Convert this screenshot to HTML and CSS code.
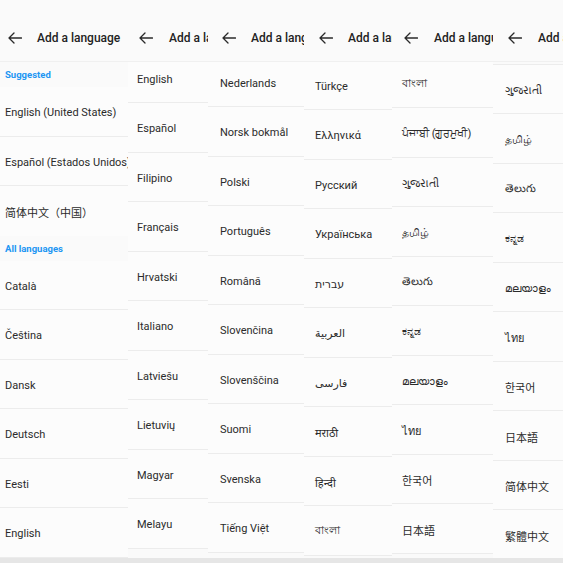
FILE: index.html
```html
<!DOCTYPE html>
<html lang="en">
<head>
<meta charset="utf-8">
<title>Add a language</title>
<link rel="stylesheet" href="styles.css">
</head>
<body>
<div class="screens">

  <section class="col c1">
    <header class="bar">
      <svg class="back" viewBox="0 0 14 12"><path d="M13.5 6H1M6 1L1 6l5 5"/></svg>
      <span class="title">Add a language</span>
    </header>
    <div class="list">
      <div class="label">Suggested</div>
      <div class="item">English (United States)</div>
      <div class="item">Español (Estados Unidos)</div>
      <div class="item last">简体中文（中国）</div>
      <div class="label">All languages</div>
      <div class="item">Català</div>
      <div class="item">Čeština</div>
      <div class="item">Dansk</div>
      <div class="item">Deutsch</div>
      <div class="item">Eesti</div>
      <div class="item">English</div>
    </div>
  </section>

  <section class="col c2">
    <header class="bar">
      <svg class="back" viewBox="0 0 14 12"><path d="M13.5 6H1M6 1L1 6l5 5"/></svg>
      <span class="title">Add a language</span>
    </header>
    <div class="list">
      <div class="item">English</div>
      <div class="item">Español</div>
      <div class="item">Filipino</div>
      <div class="item">Français</div>
      <div class="item">Hrvatski</div>
      <div class="item">Italiano</div>
      <div class="item">Latviešu</div>
      <div class="item">Lietuvių</div>
      <div class="item">Magyar</div>
      <div class="item">Melayu</div>
    </div>
  </section>

  <section class="col c3">
    <header class="bar">
      <svg class="back" viewBox="0 0 14 12"><path d="M13.5 6H1M6 1L1 6l5 5"/></svg>
      <span class="title">Add a language</span>
    </header>
    <div class="list">
      <div class="item">Nederlands</div>
      <div class="item">Norsk bokmål</div>
      <div class="item">Polski</div>
      <div class="item">Português</div>
      <div class="item">Română</div>
      <div class="item">Slovenčina</div>
      <div class="item">Slovenščina</div>
      <div class="item">Suomi</div>
      <div class="item">Svenska</div>
      <div class="item">Tiếng Việt</div>
    </div>
  </section>

  <section class="col c4">
    <header class="bar">
      <svg class="back" viewBox="0 0 14 12"><path d="M13.5 6H1M6 1L1 6l5 5"/></svg>
      <span class="title">Add a language</span>
    </header>
    <div class="list">
      <div class="item">Türkçe</div>
      <div class="item">Ελληνικά</div>
      <div class="item">Русский</div>
      <div class="item">Українська</div>
      <div class="item">עברית</div>
      <div class="item">العربية</div>
      <div class="item">فارسی</div>
      <div class="item">मराठी</div>
      <div class="item">हिन्दी</div>
      <div class="item">বাংলা</div>
    </div>
  </section>

  <section class="col c5">
    <header class="bar">
      <svg class="back" viewBox="0 0 14 12"><path d="M13.5 6H1M6 1L1 6l5 5"/></svg>
      <span class="title">Add a language</span>
    </header>
    <div class="list">
      <div class="item">বাংলা</div>
      <div class="item">ਪੰਜਾਬੀ (ਗੁਰਮੁਖੀ)</div>
      <div class="item">ગુજરાતી</div>
      <div class="item">தமிழ்</div>
      <div class="item">తెలుగు</div>
      <div class="item">ಕನ್ನಡ</div>
      <div class="item">മലയാളം</div>
      <div class="item">ไทย</div>
      <div class="item">한국어</div>
      <div class="item">日本語</div>
    </div>
  </section>

  <section class="col c6">
    <header class="bar">
      <svg class="back" viewBox="0 0 14 12"><path d="M13.5 6H1M6 1L1 6l5 5"/></svg>
      <span class="title">Add a language</span>
    </header>
    <div class="list">
      <div class="item">ગુજરાતી</div>
      <div class="item">தமிழ்</div>
      <div class="item">తెలుగు</div>
      <div class="item">ಕನ್ನಡ</div>
      <div class="item">മലയാളം</div>
      <div class="item">ไทย</div>
      <div class="item">한국어</div>
      <div class="item">日本語</div>
      <div class="item">简体中文</div>
      <div class="item">繁體中文</div>
    </div>
  </section>

</div>
<div class="navbar"></div>
</body>
</html>
```

FILE: styles.css
```css
html, body {
  margin: 0;
  padding: 0;
  width: 563px;
  height: 563px;
  overflow: hidden;
  background: #fafafa;
  font-family: Roboto, "Noto Sans", "DejaVu Sans", "Noto Sans CJK SC", sans-serif;
  color: #2b2b2b;
}

.screens {
  display: flex;
  height: 558px;
  overflow: hidden;
}

.col {
  flex: none;
  display: flex;
  flex-direction: column;
  overflow: hidden;
  background: #fafafa;
}

.c1 { width: 128px; --pad: 5px; --ax: 8px; --tx: 15px; --shift: 0px; }
.c2 { width: 80px;  --pad: 9px; --ax: 11px; --tx: 16px; --shift: -8.5px; }
.c3 { width: 96px;  --pad: 12px; --ax: 14px; --tx: 15px; --shift: -4.5px; }
.c4 { width: 88px;  --pad: 11px; --ax: 15px; --tx: 15px; --shift: -1.5px; }
.c5 { width: 101px; --pad: 10px; --ax: 12px; --tx: 16px; --shift: -3.5px; }
.c6 { width: 70px;  --pad: 12px; --ax: 15px; --tx: 16px; --shift: 1.5px; }

.bar {
  position: relative;
  z-index: 1;
  flex: none;
  height: 62px;
  box-sizing: border-box;
  padding-top: 15px;
  padding-left: var(--ax);
  display: flex;
  align-items: center;
  background: #fafafa;
  border-bottom: 1px solid #f0f0f0;
  white-space: nowrap;
}

.back {
  flex: none;
  width: 14px;
  height: 12px;
  fill: none;
  stroke: #2a2a2a;
  stroke-width: 1.3;
  stroke-linecap: round;
  stroke-linejoin: round;
}

.title {
  margin-left: var(--tx);
  font-size: 12px;
  font-weight: 500;
  color: #222;
}

.list {
  display: flex;
  flex-direction: column;
  margin-top: var(--shift);
}

.c6 .list {
  border-top: 1px solid #ececec;
}

.label {
  height: 25px;
  box-sizing: border-box;
  padding-left: var(--pad);
  display: flex;
  align-items: center;
  font-size: 9.5px;
  font-weight: 700;
  color: #2196f3;
}

.item {
  flex: none;
  height: 49.5px;
  box-sizing: border-box;
  padding-left: var(--pad);
  padding-top: 3px;
  display: flex;
  align-items: center;
  border-bottom: 1px solid #ececec;
  font-size: 11px;
  white-space: nowrap;
  background: #fcfcfc;
}

.item.last {
  border-bottom: none;
}

.navbar {
  height: 5px;
  background: #e6e6e6;
}
```
